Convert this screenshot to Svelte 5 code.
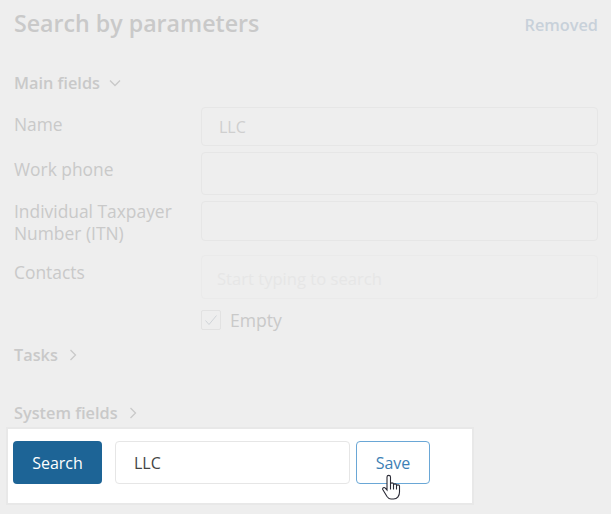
<script lang="ts">
  const fields = [
    { label: "Name", value: "LLC", cls: "h39" },
    { label: "Work phone", value: "", cls: "h43" },
    { label: "Individual Taxpayer Number (ITN)", value: "", cls: "h40", tall: true },
  ];
</script>

<div class="page">
  <header class="top">
    <h1>Search by parameters</h1>
    <span class="removed">Removed</span>
  </header>

  <div class="section open">
    Main fields
    <svg width="12" height="12" viewBox="0 0 12 12"><path d="M1 3.500 6 8.500 11 3.500" /></svg>
  </div>

  <div class="form">
    {#each fields as f}
      <div class="label" class:tall={f.tall}>{f.label}</div>
      <div class="input {f.cls}">{f.value}</div>
    {/each}
    <div class="label contacts-label">Contacts</div>
    <div class="input lookup">Start typing to search</div>
    <div></div>
    <div class="empty">
      <span class="check">
        <svg width="16" height="16" viewBox="0 0 16 16"><path d="M2.500 8.500 6 12.500 13.500 3.500" /></svg>
      </span>
      Empty
    </div>
  </div>

  <div class="section tasks">
    Tasks
    <svg width="12" height="12" viewBox="0 0 12 12"><path d="M3.500 1 8.500 6 3.500 11" /></svg>
  </div>
  <div class="section system">
    System fields
    <svg width="12" height="12" viewBox="0 0 12 12"><path d="M3.500 1 8.500 6 3.500 11" /></svg>
  </div>

  <div class="panel">
    <button class="search">Search</button>
    <div class="name">LLC</div>
    <button class="save">Save</button>
    <svg class="cursor" width="20" height="26" viewBox="0 0 20 26">
      <path d="M5 3c0-2.200 3.500-2.200 3.500 0v7c0-1.500 3-1.500 3 0v1c0-1.500 3-1.500 3 0v1c0-1.500 3-1.500 3 0v6c0 3.500-2 7-6 7H9c-2 0-3-1-4-2.500L.9 15.800c-.9-1.700 1.200-3 2.400-1.700L5 16Z" />
      <path class="ln" d="M8.500 10v5.500M11.500 11v4.500M14.500 12v3.500" />
    </svg>
  </div>
</div>

<style>
  :global(body) {
    margin: 0;
    background: #eeeeee;
  }

  .page {
    width: 611px;
    height: 514px;
    box-sizing: border-box;
    padding: 0 13px 0 14px;
    overflow: hidden;
    font-family: "Open Sans", "Noto Sans", sans-serif;
    color: #c9c9c9;
    position: relative;
  }

  .top {
    display: flex;
    justify-content: space-between;
    align-items: center;
    height: 46px;
  }

  h1 {
    margin: -1px 0 0;
    font-size: 23.200px;
    font-weight: 600;
  }

  .removed {
    font-size: 16.300px;
    font-weight: 600;
    color: #c8d1da;
    margin-top: 3px;
  }

  .section {
    display: flex;
    align-items: center;
    gap: 9px;
    font-size: 16.300px;
    font-weight: 600;
    line-height: 22px;
  }

  .section svg path {
    fill: none;
    stroke: #c9c9c9;
    stroke-width: 1.300;
  }

  .open {
    margin-top: 26px;
  }

  .form {
    display: grid;
    grid-template-columns: 187px 1fr;
    margin-top: 13px;
    row-gap: 6px;
    font-size: 17.400px;
  }

  .label {
    line-height: 22px;
    padding-top: 6px;
  }

  .tall {
    box-sizing: border-box;
    max-height: 40px;
    padding-top: 0;
    margin-top: -1px;
  }

  .input {
    box-sizing: border-box;
    border: 1px solid #e6e6e6;
    border-radius: 4px;
    padding: 1px 17px 0;
    font-size: 16px;
    display: flex;
    align-items: center;
    color: #cfcfcf;
  }

  .h39 {
    height: 39px;
  }

  .h40 {
    height: 40px;
  }

  .h43 {
    height: 43px;
  }

  .lookup {
    height: 44px;
    background: #eeeeee;
    border-color: #eaeaea;
    color: #e6e6e6;
    font-size: 16.600px;
    padding-left: 15px;
    padding-top: 2px;
    margin-top: 8px;
  }

  .contacts-label {
    margin-top: 8px;
  }

  .empty {
    display: flex;
    align-items: center;
    gap: 9px;
    height: 20px;
    margin-top: 5px;
    font-size: 17.600px;
  }

  .check {
    width: 20px;
    height: 20px;
    box-sizing: border-box;
    border: 1px solid #e2e2e2;
    border-radius: 2px;
    display: flex;
    align-items: center;
    justify-content: center;
  }

  .check path {
    fill: none;
    stroke: #d0d4d8;
    stroke-width: 1;
  }

  .tasks {
    margin-top: 14px;
  }

  .system {
    margin-top: 36px;
  }

  .panel {
    position: absolute;
    left: 8px;
    top: 429px;
    width: 464px;
    height: 74px;
    box-sizing: border-box;
    background: #fff;
    box-shadow: 0 0 0 2px #e8e8e8;
    display: flex;
    align-items: flex-start;
    padding: 12px 0 0 5px;
  }

  button {
    font: inherit;
    font-size: 16px;
    cursor: pointer;
    height: 43px;
    border-radius: 4px;
  }

  .search {
    width: 89px;
    background: #1d6496;
    color: #fff;
    border: none;
  }

  .name {
    box-sizing: border-box;
    width: 235px;
    height: 43px;
    margin-left: 13px;
    border: 1px solid #e6e6e6;
    border-radius: 4px;
    padding: 0 18px;
    display: flex;
    align-items: center;
    font-size: 16px;
    color: #444;
  }

  .save {
    width: 74px;
    margin-left: 6px;
    background: #fff;
    border: 1px solid #6aa7d6;
    color: #3d7fb5;
  }

  .cursor {
    position: absolute;
    left: 374px;
    top: 45px;
  }

  .cursor path {
    fill: #fff;
    stroke: #2a2a35;
    stroke-width: 1.100;
  }

  .cursor .ln {
    fill: none;
  }
</style>
